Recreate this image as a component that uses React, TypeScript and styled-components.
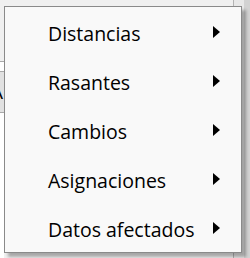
import React from "react";
import styled, { createGlobalStyle } from "styled-components";

const Global = createGlobalStyle`
  html, body { margin: 0; padding: 0; background: #f0f0f0; }
  body { width: 250px; height: 258px; overflow: hidden; font-family: "Open Sans", "Noto Sans", sans-serif; }
`;

const Stage = styled.div`
  position: relative;
  width: 250px;
  height: 258px;
  display: flex;
  background: #f0f0f0;
`;

const LeftStrip = styled.div`
  width: 4px;
  display: flex;
  flex-direction: column;
  padding-top: 61px;
`;

const StripCell = styled.div<{ $h: number; $bg: string }>`
  height: ${(p) => p.$h}px;
  background: ${(p) => p.$bg};
  border-top: 1px solid #a9a9a9;
  overflow: hidden;
  font-size: 19px;
  line-height: ${(p) => p.$h}px;
  color: #000;
  text-indent: -9px;
`;

const Fill = styled.div`
  flex: 1;
`;

const RightPanel = styled.div`
  width: 16px;
  display: flex;
  border-left: 1px solid #b4b4b4;
`;

const RightLight = styled.div`
  width: 10px;
  background: #e8e8e8;
`;

const RightDark = styled.div`
  flex: 1;
  background: #d2d2d2;
`;

const Menu = styled.ul`
  position: absolute;
  left: 4px;
  top: 6px;
  width: 236px;
  margin: 0;
  padding: 0;
  list-style: none;
  background: #f9f9f9;
  border: 1px solid #8a8a8a;
  box-shadow: 4px 4px 3px rgba(0, 0, 0, 0.3);
`;

const Item = styled.li`
  height: 49px;
  display: flex;
  align-items: center;
  justify-content: space-between;
  padding: 0 20px 0 43px;
  font-size: 19.5px;
  color: #000;
  box-sizing: border-box;
`;

const Label = styled.span`
  padding-top: 3px;
`;

const Arrow = styled.svg`
  width: 8px;
  height: 12px;
  margin-top: 1px;
`;

const items = ["Distancias", "Rasantes", "Cambios", "Asignaciones", "Datos afectados"];

export default function App() {
  return (
    <>
      <Global />
      <Stage>
        <LeftStrip>
          <StripCell $h={9} $bg="#ffffff" />
          <StripCell $h={41} $bg="#e1e1e1">A</StripCell>
          <StripCell $h={150} $bg="#ffffff" />
        </LeftStrip>
        <Fill />
        <RightPanel>
          <RightLight />
          <RightDark />
        </RightPanel>
        <Menu>
          {items.map((t) => (
            <Item key={t}>
              <Label>{t}</Label>
              <Arrow viewBox="0 0 8 12">
                <path d="M0 0 L7 6 L0 12 Z" fill="#000" />
              </Arrow>
            </Item>
          ))}
        </Menu>
      </Stage>
    </>
  );
}
